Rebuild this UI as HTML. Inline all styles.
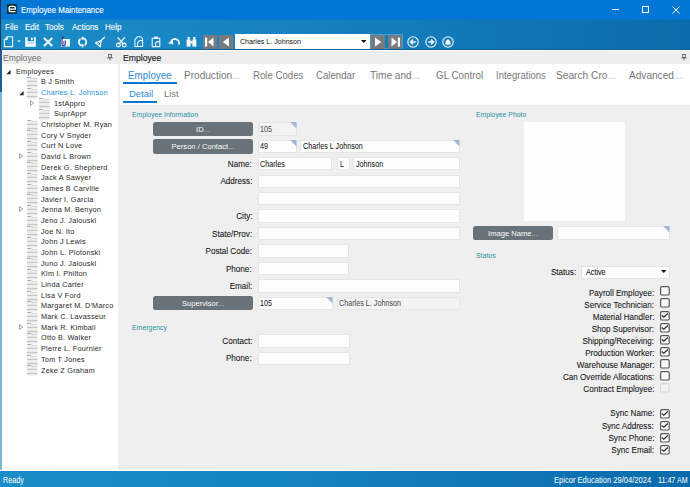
<!DOCTYPE html><html><head><meta charset="utf-8"><style>
html,body{margin:0;padding:0;}
body{width:690px;height:487px;position:relative;overflow:hidden;background:#f0eff0;font-family:'Liberation Sans',sans-serif;}
div,svg{box-sizing:border-box;}
svg{position:absolute;overflow:visible;}
</style></head><body>
<div style="position:absolute;left:0px;top:0px;width:690px;height:19px;background:#0377d6;"></div>
<div style="position:absolute;left:7px;top:4px;width:10px;height:10px;background:#13343a;"></div>
<svg style="left:7px;top:4px" width="10" height="10"><path d="M2.3 5 H8.3 V3.9 C8.3 2.7 7.7 2.3 6.7 2.3 H3.7 C2.7 2.3 2.1 2.9 2.1 3.9 V6.1 C2.1 7.1 2.7 7.7 3.7 7.7 H8.4" stroke="#fff" stroke-width="1.25" fill="none"/></svg>
<div style="position:absolute;top:6.00px;font-size:8.9px;line-height:8.9px;color:#fff;white-space:nowrap;-webkit-text-stroke:0.1px #fff;left:20.90px;transform:scaleX(0.8906);transform-origin:0 0;">Employee Maintenance</div>
<div style="position:absolute;left:612px;top:9px;width:7px;height:1px;background:#fff;"></div>
<div style="position:absolute;left:642px;top:6px;width:7px;height:7px;border:1px solid #fff;"></div>
<svg style="left:672px;top:6px" width="8" height="8"><path d="M0.5 0.5 L7.5 7.5 M7.5 0.5 L0.5 7.5" stroke="#fff" stroke-width="1"/></svg>
<div style="position:absolute;left:0px;top:19px;width:690px;height:30px;background:linear-gradient(90deg,#1b8cc8 0%,#1683c0 40%,#0c6cab 100%);"></div>
<div style="position:absolute;left:0px;top:19px;width:690px;height:1px;background:linear-gradient(90deg,#0f80cf 0%,#0c7ac6 40%,#0672c2 100%);"></div>
<div style="position:absolute;left:0px;top:49px;width:690px;height:1px;background:#0b5f9a;"></div>
<div style="position:absolute;left:0px;top:0px;width:1px;height:50px;background:#1f3550;"></div>
<div style="position:absolute;top:23.00px;font-size:8.85px;line-height:8.85px;color:#fff;white-space:nowrap;-webkit-text-stroke:0.1px #fff;left:4.70px;transform:scaleX(0.9100);transform-origin:0 0;">File</div>
<div style="position:absolute;top:23.00px;font-size:8.85px;line-height:8.85px;color:#fff;white-space:nowrap;-webkit-text-stroke:0.1px #fff;left:24.50px;transform:scaleX(0.9100);transform-origin:0 0;">Edit</div>
<div style="position:absolute;top:23.00px;font-size:8.85px;line-height:8.85px;color:#fff;white-space:nowrap;-webkit-text-stroke:0.1px #fff;left:45.20px;transform:scaleX(0.9100);transform-origin:0 0;">Tools</div>
<div style="position:absolute;top:23.00px;font-size:8.85px;line-height:8.85px;color:#fff;white-space:nowrap;-webkit-text-stroke:0.1px #fff;left:71.60px;transform:scaleX(0.9100);transform-origin:0 0;">Actions</div>
<div style="position:absolute;top:23.00px;font-size:8.85px;line-height:8.85px;color:#fff;white-space:nowrap;-webkit-text-stroke:0.1px #fff;left:104.50px;transform:scaleX(0.9100);transform-origin:0 0;">Help</div>
<svg style="left:0;top:0" width="460" height="50" viewBox="0 0 460 50">
<g fill="none" stroke="#f4f8fb" stroke-linejoin="round">
 <path d="M7.2 36.8 H12.6 V46.6 H4.4 V39.8 Z" stroke-width="1.1"/>
 <path d="M4.6 39.6 L7.4 39.6 L7.4 36.9" stroke-width="0.9"/>
</g>
<path d="M17.2 40.4 H20.8 L19 42.2 Z" fill="#f4f8fb"/>
<path d="M25.2 37.2 H35.8 V46.8 H25.2 Z" fill="#f4f8fb"/>
<rect x="27.6" y="37.2" width="6.4" height="4" fill="#1a8ac6"/>
<rect x="31" y="37.8" width="1.8" height="2.4" fill="#f4f8fb"/>
<rect x="27.6" y="42.6" width="6.4" height="1" fill="#8cc4e4"/>
<path d="M44 38 L52.2 46 M52.2 38 L44 46" stroke="#f4f8fb" stroke-width="2.1"/>
<path d="M61 39 H70 V46.6 H61 Z" fill="#f4f8fb"/>
<path d="M64 37 C62 37 62 38 62 39.5 V44.8 C62 46.2 65.2 46.2 65.2 44.8 V40.5" stroke="#1c2d86" stroke-width="1.1" fill="none"/>
<path d="M63.6 41 V44.6" stroke="#a03060" stroke-width="0.7"/>
<g fill="none" stroke="#f4f8fb" stroke-width="1.7">
 <path d="M80.48 38.97 A3.7 3.7 0 0 0 82.28 45.69"/>
 <path d="M84.72 45.03 A3.7 3.7 0 0 0 82.92 38.31"/>
</g>
<path d="M81.88 43.59 L84.68 45.69 L81.88 47.79 Z" fill="#f4f8fb"/>
<path d="M83.32 36.21 L80.52 38.31 L83.32 40.41 Z" fill="#f4f8fb"/>
<path d="M104.8 37 L100.8 40.8" stroke="#f4f8fb" stroke-width="1.3"/>
<path d="M101.2 40.6 L95.4 42.8 L100.2 46.8 Z" stroke="#f4f8fb" stroke-width="1.2" fill="none" stroke-linejoin="round"/>
<path d="M97.2 44.4 L100.8 41.4" stroke="#f4f8fb" stroke-width="0.8"/>
<g fill="none" stroke="#f4f8fb">
 <path d="M117.6 37.4 L123.8 44.2 M124.8 37.4 L118.6 44.2" stroke-width="1.3"/>
 <circle cx="118.4" cy="45" r="1.9" stroke-width="1.2"/>
 <circle cx="124.2" cy="45" r="1.9" stroke-width="1.2"/>
</g>
<g fill="none" stroke="#f4f8fb" stroke-width="1.05" stroke-linejoin="round">
 <path d="M137.4 36.8 H140.8 L142.6 38.6 V46.4 H134.9 V39.6 Z"/>
 <path d="M137.6 46.3 V42.6 L140 40.4 H142.5"/>
</g>
<g fill="none" stroke="#f4f8fb" stroke-width="1.05">
 <path d="M152.2 38.2 H159.8 V46.6 H152.2 Z"/>
 <path d="M155.6 46.5 V43 L157.2 41.6 H159.7"/>
</g>
<rect x="154.2" y="36.6" width="3.6" height="2.2" fill="#f4f8fb"/>
<path d="M171.2 41.6 A3.9 3.9 0 0 1 178.8 44.6" stroke="#f4f8fb" stroke-width="1.8" fill="none"/>
<path d="M168 43.2 L172.8 39.4 L173.4 44.4 Z" fill="#f4f8fb"/>
<g fill="#f4f8fb">
 <rect x="187.6" y="37" width="2.2" height="2.8"/>
 <rect x="193.2" y="37" width="2.2" height="2.8"/>
 <rect x="186.6" y="39.6" width="4" height="7"/>
 <rect x="192.4" y="39.6" width="4" height="7"/>
 <rect x="190.4" y="41" width="2.2" height="2.6"/>
</g>
</svg>
<div style="position:absolute;left:203px;top:35px;width:14px;height:14px;background:#777b80;"></div>
<svg style="left:203px;top:35px" width="14" height="14"><rect x="2" y="2.6" width="2.2" height="9" fill="#fff"/><path d="M10.5 2.6 V11.6 L5 7.1 Z" fill="#fff"/></svg>
<div style="position:absolute;left:219.3px;top:35px;width:14px;height:14px;background:#777b80;"></div>
<svg style="left:219.3px;top:35px" width="14" height="14"><path d="M10 2.6 V11.6 L3.8 7.1 Z" fill="#fff"/></svg>
<div style="position:absolute;left:235px;top:34px;width:134.5px;height:15px;background:#fff;"></div>
<svg style="left:360.5px;top:40px" width="6" height="4"><path d="M0 0 H5.5 L2.75 3 Z" fill="#111"/></svg>
<div style="position:absolute;top:38.00px;font-size:8.1px;line-height:8.1px;color:#111;white-space:nowrap;left:239.60px;transform:scaleX(0.8747);transform-origin:0 0;">Charles L. Johnson</div>
<div style="position:absolute;left:369.8px;top:34px;width:33.5px;height:15px;border:1px solid #3ca2d8;"></div>
<div style="position:absolute;left:371px;top:35px;width:14px;height:14px;background:#777b80;"></div>
<svg style="left:371px;top:35px" width="14" height="14"><path d="M4 2.6 V11.6 L10.2 7.1 Z" fill="#fff"/></svg>
<div style="position:absolute;left:387.5px;top:35px;width:14px;height:14px;background:#777b80;"></div>
<svg style="left:387.5px;top:35px" width="14" height="14"><path d="M3.5 2.6 V11.6 L9 7.1 Z" fill="#fff"/><rect x="9.8" y="2.6" width="2.2" height="9" fill="#fff"/></svg>
<svg style="left:407px;top:35.5px" width="12" height="12"><circle cx="6" cy="6" r="5.2" stroke="#f4f8fb" stroke-width="1.1" fill="none"/><path d="M8.8 6 H4 M6 3.6 L3.4 6 L6 8.4" stroke="#f4f8fb" stroke-width="1.5" fill="none"/></svg>
<svg style="left:424.5px;top:35.5px" width="12" height="12"><circle cx="6" cy="6" r="5.2" stroke="#f4f8fb" stroke-width="1.1" fill="none"/><path d="M3.2 6 H8 M6 3.6 L8.6 6 L6 8.4" stroke="#f4f8fb" stroke-width="1.5" fill="none"/></svg>
<svg style="left:441.7px;top:35.5px" width="12" height="12"><circle cx="6" cy="6" r="5.2" stroke="#f4f8fb" stroke-width="1.1" fill="none"/><path d="M3.5 8.8 V5.2 L6 3 L8.5 5.2 V8.8 Z" fill="#f4f8fb"/></svg>
<div style="position:absolute;left:1px;top:50px;width:117px;height:421px;background:#fff;"></div>
<div style="position:absolute;left:1px;top:50px;width:117px;height:14px;background:#efeeef;border-top:1px solid #fdfdfd;"></div>
<div style="position:absolute;top:53.00px;font-size:9.6px;line-height:9.6px;color:#6e6e6e;white-space:nowrap;left:3.00px;transform:scaleX(0.8978);transform-origin:0 0;">Employee</div>
<svg style="left:107px;top:54px" width="6" height="7"><path d="M1 0.5 H5 M1.6 0.5 V3.6 H4.4 V0.5 M0.3 3.8 H5.7 M3 3.8 V6.5" stroke="#606060" stroke-width="0.9" fill="none"/></svg>
<div style="position:absolute;left:0px;top:50px;width:1.5px;height:42px;background:#1f5c98;"></div>
<div style="position:absolute;left:0px;top:92px;width:1.5px;height:379px;background:#7cb8d6;"></div>
<svg style="left:5.6px;top:69.50px" width="5" height="5"><path d="M4.6 0 V4.2 H0.2 Z" fill="#262626"/></svg>
<div style="position:absolute;top:68.00px;font-size:8.1px;line-height:8.1px;color:#2b2b2b;white-space:nowrap;letter-spacing:0.25px;-webkit-text-stroke:0.03px #2b2b2b;left:15.70px;transform:scaleX(0.9000);transform-origin:0 0;">Employees</div>
<svg style="left:27px;top:77.072px" width="11" height="11"><path d="M0 0.4 H4 L5 1.4 H10.5 V10.2 H0 Z" fill="#efefef"/><rect x="0" y="0" width="4.2" height="0.9" fill="#a8a8a8"/><rect x="4.2" y="0.9" width="6.3" height="0.8" fill="#c8c8c8"/><rect x="0" y="3.9" width="10.5" height="1" fill="#c4c4c4"/><rect x="0" y="7.9" width="10.5" height="1" fill="#c4c4c4"/><rect x="0" y="9.6" width="10.5" height="0.6" fill="#d4d4d4"/></svg>
<div style="position:absolute;top:78.00px;font-size:8.1px;line-height:8.1px;color:#2b2b2b;white-space:nowrap;letter-spacing:0.25px;-webkit-text-stroke:0.03px #2b2b2b;left:40.90px;transform:scaleX(0.9000);transform-origin:0 0;">B J Smith</div>
<svg style="left:27px;top:87.74400000000001px" width="11" height="11"><path d="M0 0.4 H4 L5 1.4 H10.5 V10.2 H0 Z" fill="#efefef"/><rect x="0" y="0" width="4.2" height="0.9" fill="#a8a8a8"/><rect x="4.2" y="0.9" width="6.3" height="0.8" fill="#c8c8c8"/><rect x="0" y="3.9" width="10.5" height="1" fill="#c4c4c4"/><rect x="0" y="7.9" width="10.5" height="1" fill="#c4c4c4"/><rect x="0" y="9.6" width="10.5" height="0.6" fill="#d4d4d4"/></svg>
<svg style="left:18.6px;top:90.84px" width="5" height="5"><path d="M4.6 0 V4.2 H0.2 Z" fill="#262626"/></svg>
<div style="position:absolute;top:89.00px;font-size:8.1px;line-height:8.1px;color:#2394dc;white-space:nowrap;letter-spacing:0.25px;-webkit-text-stroke:0.03px #2394dc;left:40.90px;transform:scaleX(0.9000);transform-origin:0 0;">Charles L. Johnson</div>
<svg style="left:39px;top:98.41600000000001px" width="11" height="11"><path d="M0 0.4 H4 L5 1.4 H10.5 V10.2 H0 Z" fill="#efefef"/><rect x="0" y="0" width="4.2" height="0.9" fill="#a8a8a8"/><rect x="4.2" y="0.9" width="6.3" height="0.8" fill="#c8c8c8"/><rect x="0" y="3.9" width="10.5" height="1" fill="#c4c4c4"/><rect x="0" y="7.9" width="10.5" height="1" fill="#c4c4c4"/><rect x="0" y="9.6" width="10.5" height="0.6" fill="#d4d4d4"/></svg>
<svg style="left:30.4px;top:99.72px" width="5" height="6"><path d="M0.5 0.6 L3.8 3 L0.5 5.4 Z" stroke="#8a8a8a" stroke-width="0.8" fill="none"/></svg>
<div style="position:absolute;top:100.00px;font-size:8.1px;line-height:8.1px;color:#2b2b2b;white-space:nowrap;letter-spacing:0.25px;-webkit-text-stroke:0.03px #2b2b2b;left:53.60px;transform:scaleX(0.9000);transform-origin:0 0;">1stAppro</div>
<svg style="left:39px;top:109.08800000000001px" width="11" height="11"><path d="M0 0.4 H4 L5 1.4 H10.5 V10.2 H0 Z" fill="#efefef"/><rect x="0" y="0" width="4.2" height="0.9" fill="#a8a8a8"/><rect x="4.2" y="0.9" width="6.3" height="0.8" fill="#c8c8c8"/><rect x="0" y="3.9" width="10.5" height="1" fill="#c4c4c4"/><rect x="0" y="7.9" width="10.5" height="1" fill="#c4c4c4"/><rect x="0" y="9.6" width="10.5" height="0.6" fill="#d4d4d4"/></svg>
<div style="position:absolute;top:110.00px;font-size:8.1px;line-height:8.1px;color:#2b2b2b;white-space:nowrap;letter-spacing:0.25px;-webkit-text-stroke:0.03px #2b2b2b;left:53.60px;transform:scaleX(0.9000);transform-origin:0 0;">SuprAppr</div>
<svg style="left:27px;top:119.76px" width="11" height="11"><path d="M0 0.4 H4 L5 1.4 H10.5 V10.2 H0 Z" fill="#efefef"/><rect x="0" y="0" width="4.2" height="0.9" fill="#a8a8a8"/><rect x="4.2" y="0.9" width="6.3" height="0.8" fill="#c8c8c8"/><rect x="0" y="3.9" width="10.5" height="1" fill="#c4c4c4"/><rect x="0" y="7.9" width="10.5" height="1" fill="#c4c4c4"/><rect x="0" y="9.6" width="10.5" height="0.6" fill="#d4d4d4"/></svg>
<div style="position:absolute;top:121.00px;font-size:8.1px;line-height:8.1px;color:#2b2b2b;white-space:nowrap;letter-spacing:0.25px;-webkit-text-stroke:0.03px #2b2b2b;left:40.90px;transform:scaleX(0.9000);transform-origin:0 0;">Christopher M. Ryan</div>
<svg style="left:27px;top:130.43200000000002px" width="11" height="11"><path d="M0 0.4 H4 L5 1.4 H10.5 V10.2 H0 Z" fill="#efefef"/><rect x="0" y="0" width="4.2" height="0.9" fill="#a8a8a8"/><rect x="4.2" y="0.9" width="6.3" height="0.8" fill="#c8c8c8"/><rect x="0" y="3.9" width="10.5" height="1" fill="#c4c4c4"/><rect x="0" y="7.9" width="10.5" height="1" fill="#c4c4c4"/><rect x="0" y="9.6" width="10.5" height="0.6" fill="#d4d4d4"/></svg>
<div style="position:absolute;top:132.00px;font-size:8.1px;line-height:8.1px;color:#2b2b2b;white-space:nowrap;letter-spacing:0.25px;-webkit-text-stroke:0.03px #2b2b2b;left:40.90px;transform:scaleX(0.9000);transform-origin:0 0;">Cory V Snyder</div>
<svg style="left:27px;top:141.10399999999998px" width="11" height="11"><path d="M0 0.4 H4 L5 1.4 H10.5 V10.2 H0 Z" fill="#efefef"/><rect x="0" y="0" width="4.2" height="0.9" fill="#a8a8a8"/><rect x="4.2" y="0.9" width="6.3" height="0.8" fill="#c8c8c8"/><rect x="0" y="3.9" width="10.5" height="1" fill="#c4c4c4"/><rect x="0" y="7.9" width="10.5" height="1" fill="#c4c4c4"/><rect x="0" y="9.6" width="10.5" height="0.6" fill="#d4d4d4"/></svg>
<div style="position:absolute;top:142.00px;font-size:8.1px;line-height:8.1px;color:#2b2b2b;white-space:nowrap;letter-spacing:0.25px;-webkit-text-stroke:0.03px #2b2b2b;left:40.90px;transform:scaleX(0.9000);transform-origin:0 0;">Curt N Love</div>
<svg style="left:27px;top:151.776px" width="11" height="11"><path d="M0 0.4 H4 L5 1.4 H10.5 V10.2 H0 Z" fill="#efefef"/><rect x="0" y="0" width="4.2" height="0.9" fill="#a8a8a8"/><rect x="4.2" y="0.9" width="6.3" height="0.8" fill="#c8c8c8"/><rect x="0" y="3.9" width="10.5" height="1" fill="#c4c4c4"/><rect x="0" y="7.9" width="10.5" height="1" fill="#c4c4c4"/><rect x="0" y="9.6" width="10.5" height="0.6" fill="#d4d4d4"/></svg>
<svg style="left:18.5px;top:153.08px" width="5" height="6"><path d="M0.5 0.6 L3.8 3 L0.5 5.4 Z" stroke="#8a8a8a" stroke-width="0.8" fill="none"/></svg>
<div style="position:absolute;top:153.00px;font-size:8.1px;line-height:8.1px;color:#2b2b2b;white-space:nowrap;letter-spacing:0.25px;-webkit-text-stroke:0.03px #2b2b2b;left:40.90px;transform:scaleX(0.9000);transform-origin:0 0;">David L Brown</div>
<svg style="left:27px;top:162.44799999999998px" width="11" height="11"><path d="M0 0.4 H4 L5 1.4 H10.5 V10.2 H0 Z" fill="#efefef"/><rect x="0" y="0" width="4.2" height="0.9" fill="#a8a8a8"/><rect x="4.2" y="0.9" width="6.3" height="0.8" fill="#c8c8c8"/><rect x="0" y="3.9" width="10.5" height="1" fill="#c4c4c4"/><rect x="0" y="7.9" width="10.5" height="1" fill="#c4c4c4"/><rect x="0" y="9.6" width="10.5" height="0.6" fill="#d4d4d4"/></svg>
<div style="position:absolute;top:164.00px;font-size:8.1px;line-height:8.1px;color:#2b2b2b;white-space:nowrap;letter-spacing:0.25px;-webkit-text-stroke:0.03px #2b2b2b;left:40.90px;transform:scaleX(0.9000);transform-origin:0 0;">Derek G. Shepherd</div>
<svg style="left:27px;top:173.12px" width="11" height="11"><path d="M0 0.4 H4 L5 1.4 H10.5 V10.2 H0 Z" fill="#efefef"/><rect x="0" y="0" width="4.2" height="0.9" fill="#a8a8a8"/><rect x="4.2" y="0.9" width="6.3" height="0.8" fill="#c8c8c8"/><rect x="0" y="3.9" width="10.5" height="1" fill="#c4c4c4"/><rect x="0" y="7.9" width="10.5" height="1" fill="#c4c4c4"/><rect x="0" y="9.6" width="10.5" height="0.6" fill="#d4d4d4"/></svg>
<div style="position:absolute;top:174.00px;font-size:8.1px;line-height:8.1px;color:#2b2b2b;white-space:nowrap;letter-spacing:0.25px;-webkit-text-stroke:0.03px #2b2b2b;left:40.90px;transform:scaleX(0.9000);transform-origin:0 0;">Jack A Sawyer</div>
<svg style="left:27px;top:183.792px" width="11" height="11"><path d="M0 0.4 H4 L5 1.4 H10.5 V10.2 H0 Z" fill="#efefef"/><rect x="0" y="0" width="4.2" height="0.9" fill="#a8a8a8"/><rect x="4.2" y="0.9" width="6.3" height="0.8" fill="#c8c8c8"/><rect x="0" y="3.9" width="10.5" height="1" fill="#c4c4c4"/><rect x="0" y="7.9" width="10.5" height="1" fill="#c4c4c4"/><rect x="0" y="9.6" width="10.5" height="0.6" fill="#d4d4d4"/></svg>
<div style="position:absolute;top:185.00px;font-size:8.1px;line-height:8.1px;color:#2b2b2b;white-space:nowrap;letter-spacing:0.25px;-webkit-text-stroke:0.03px #2b2b2b;left:40.90px;transform:scaleX(0.9000);transform-origin:0 0;">James B Carville</div>
<svg style="left:27px;top:194.464px" width="11" height="11"><path d="M0 0.4 H4 L5 1.4 H10.5 V10.2 H0 Z" fill="#efefef"/><rect x="0" y="0" width="4.2" height="0.9" fill="#a8a8a8"/><rect x="4.2" y="0.9" width="6.3" height="0.8" fill="#c8c8c8"/><rect x="0" y="3.9" width="10.5" height="1" fill="#c4c4c4"/><rect x="0" y="7.9" width="10.5" height="1" fill="#c4c4c4"/><rect x="0" y="9.6" width="10.5" height="0.6" fill="#d4d4d4"/></svg>
<div style="position:absolute;top:196.00px;font-size:8.1px;line-height:8.1px;color:#2b2b2b;white-space:nowrap;letter-spacing:0.25px;-webkit-text-stroke:0.03px #2b2b2b;left:40.90px;transform:scaleX(0.9000);transform-origin:0 0;">Javier I. Garcia</div>
<svg style="left:27px;top:205.13600000000002px" width="11" height="11"><path d="M0 0.4 H4 L5 1.4 H10.5 V10.2 H0 Z" fill="#efefef"/><rect x="0" y="0" width="4.2" height="0.9" fill="#a8a8a8"/><rect x="4.2" y="0.9" width="6.3" height="0.8" fill="#c8c8c8"/><rect x="0" y="3.9" width="10.5" height="1" fill="#c4c4c4"/><rect x="0" y="7.9" width="10.5" height="1" fill="#c4c4c4"/><rect x="0" y="9.6" width="10.5" height="0.6" fill="#d4d4d4"/></svg>
<svg style="left:18.5px;top:206.44px" width="5" height="6"><path d="M0.5 0.6 L3.8 3 L0.5 5.4 Z" stroke="#8a8a8a" stroke-width="0.8" fill="none"/></svg>
<div style="position:absolute;top:206.00px;font-size:8.1px;line-height:8.1px;color:#2b2b2b;white-space:nowrap;letter-spacing:0.25px;-webkit-text-stroke:0.03px #2b2b2b;left:40.90px;transform:scaleX(0.9000);transform-origin:0 0;">Jenna M. Benyon</div>
<svg style="left:27px;top:215.808px" width="11" height="11"><path d="M0 0.4 H4 L5 1.4 H10.5 V10.2 H0 Z" fill="#efefef"/><rect x="0" y="0" width="4.2" height="0.9" fill="#a8a8a8"/><rect x="4.2" y="0.9" width="6.3" height="0.8" fill="#c8c8c8"/><rect x="0" y="3.9" width="10.5" height="1" fill="#c4c4c4"/><rect x="0" y="7.9" width="10.5" height="1" fill="#c4c4c4"/><rect x="0" y="9.6" width="10.5" height="0.6" fill="#d4d4d4"/></svg>
<div style="position:absolute;top:217.00px;font-size:8.1px;line-height:8.1px;color:#2b2b2b;white-space:nowrap;letter-spacing:0.25px;-webkit-text-stroke:0.03px #2b2b2b;left:40.90px;transform:scaleX(0.9000);transform-origin:0 0;">Jeno J. Jalouski</div>
<svg style="left:27px;top:226.48000000000002px" width="11" height="11"><path d="M0 0.4 H4 L5 1.4 H10.5 V10.2 H0 Z" fill="#efefef"/><rect x="0" y="0" width="4.2" height="0.9" fill="#a8a8a8"/><rect x="4.2" y="0.9" width="6.3" height="0.8" fill="#c8c8c8"/><rect x="0" y="3.9" width="10.5" height="1" fill="#c4c4c4"/><rect x="0" y="7.9" width="10.5" height="1" fill="#c4c4c4"/><rect x="0" y="9.6" width="10.5" height="0.6" fill="#d4d4d4"/></svg>
<div style="position:absolute;top:228.00px;font-size:8.1px;line-height:8.1px;color:#2b2b2b;white-space:nowrap;letter-spacing:0.25px;-webkit-text-stroke:0.03px #2b2b2b;left:40.90px;transform:scaleX(0.9000);transform-origin:0 0;">Joe N. Ito</div>
<svg style="left:27px;top:237.152px" width="11" height="11"><path d="M0 0.4 H4 L5 1.4 H10.5 V10.2 H0 Z" fill="#efefef"/><rect x="0" y="0" width="4.2" height="0.9" fill="#a8a8a8"/><rect x="4.2" y="0.9" width="6.3" height="0.8" fill="#c8c8c8"/><rect x="0" y="3.9" width="10.5" height="1" fill="#c4c4c4"/><rect x="0" y="7.9" width="10.5" height="1" fill="#c4c4c4"/><rect x="0" y="9.6" width="10.5" height="0.6" fill="#d4d4d4"/></svg>
<div style="position:absolute;top:238.00px;font-size:8.1px;line-height:8.1px;color:#2b2b2b;white-space:nowrap;letter-spacing:0.25px;-webkit-text-stroke:0.03px #2b2b2b;left:40.90px;transform:scaleX(0.9000);transform-origin:0 0;">John J Lewis</div>
<svg style="left:27px;top:247.824px" width="11" height="11"><path d="M0 0.4 H4 L5 1.4 H10.5 V10.2 H0 Z" fill="#efefef"/><rect x="0" y="0" width="4.2" height="0.9" fill="#a8a8a8"/><rect x="4.2" y="0.9" width="6.3" height="0.8" fill="#c8c8c8"/><rect x="0" y="3.9" width="10.5" height="1" fill="#c4c4c4"/><rect x="0" y="7.9" width="10.5" height="1" fill="#c4c4c4"/><rect x="0" y="9.6" width="10.5" height="0.6" fill="#d4d4d4"/></svg>
<div style="position:absolute;top:249.00px;font-size:8.1px;line-height:8.1px;color:#2b2b2b;white-space:nowrap;letter-spacing:0.25px;-webkit-text-stroke:0.03px #2b2b2b;left:40.90px;transform:scaleX(0.9000);transform-origin:0 0;">John L. Plotonski</div>
<svg style="left:27px;top:258.496px" width="11" height="11"><path d="M0 0.4 H4 L5 1.4 H10.5 V10.2 H0 Z" fill="#efefef"/><rect x="0" y="0" width="4.2" height="0.9" fill="#a8a8a8"/><rect x="4.2" y="0.9" width="6.3" height="0.8" fill="#c8c8c8"/><rect x="0" y="3.9" width="10.5" height="1" fill="#c4c4c4"/><rect x="0" y="7.9" width="10.5" height="1" fill="#c4c4c4"/><rect x="0" y="9.6" width="10.5" height="0.6" fill="#d4d4d4"/></svg>
<div style="position:absolute;top:260.00px;font-size:8.1px;line-height:8.1px;color:#2b2b2b;white-space:nowrap;letter-spacing:0.25px;-webkit-text-stroke:0.03px #2b2b2b;left:40.90px;transform:scaleX(0.9000);transform-origin:0 0;">Juno J. Jalouski</div>
<svg style="left:27px;top:269.168px" width="11" height="11"><path d="M0 0.4 H4 L5 1.4 H10.5 V10.2 H0 Z" fill="#efefef"/><rect x="0" y="0" width="4.2" height="0.9" fill="#a8a8a8"/><rect x="4.2" y="0.9" width="6.3" height="0.8" fill="#c8c8c8"/><rect x="0" y="3.9" width="10.5" height="1" fill="#c4c4c4"/><rect x="0" y="7.9" width="10.5" height="1" fill="#c4c4c4"/><rect x="0" y="9.6" width="10.5" height="0.6" fill="#d4d4d4"/></svg>
<div style="position:absolute;top:270.00px;font-size:8.1px;line-height:8.1px;color:#2b2b2b;white-space:nowrap;letter-spacing:0.25px;-webkit-text-stroke:0.03px #2b2b2b;left:40.90px;transform:scaleX(0.9000);transform-origin:0 0;">Kim I. Philton</div>
<svg style="left:27px;top:279.84px" width="11" height="11"><path d="M0 0.4 H4 L5 1.4 H10.5 V10.2 H0 Z" fill="#efefef"/><rect x="0" y="0" width="4.2" height="0.9" fill="#a8a8a8"/><rect x="4.2" y="0.9" width="6.3" height="0.8" fill="#c8c8c8"/><rect x="0" y="3.9" width="10.5" height="1" fill="#c4c4c4"/><rect x="0" y="7.9" width="10.5" height="1" fill="#c4c4c4"/><rect x="0" y="9.6" width="10.5" height="0.6" fill="#d4d4d4"/></svg>
<div style="position:absolute;top:281.00px;font-size:8.1px;line-height:8.1px;color:#2b2b2b;white-space:nowrap;letter-spacing:0.25px;-webkit-text-stroke:0.03px #2b2b2b;left:40.90px;transform:scaleX(0.9000);transform-origin:0 0;">Linda Carter</div>
<svg style="left:27px;top:290.512px" width="11" height="11"><path d="M0 0.4 H4 L5 1.4 H10.5 V10.2 H0 Z" fill="#efefef"/><rect x="0" y="0" width="4.2" height="0.9" fill="#a8a8a8"/><rect x="4.2" y="0.9" width="6.3" height="0.8" fill="#c8c8c8"/><rect x="0" y="3.9" width="10.5" height="1" fill="#c4c4c4"/><rect x="0" y="7.9" width="10.5" height="1" fill="#c4c4c4"/><rect x="0" y="9.6" width="10.5" height="0.6" fill="#d4d4d4"/></svg>
<div style="position:absolute;top:292.00px;font-size:8.1px;line-height:8.1px;color:#2b2b2b;white-space:nowrap;letter-spacing:0.25px;-webkit-text-stroke:0.03px #2b2b2b;left:40.90px;transform:scaleX(0.9000);transform-origin:0 0;">Lisa V Ford</div>
<svg style="left:27px;top:301.184px" width="11" height="11"><path d="M0 0.4 H4 L5 1.4 H10.5 V10.2 H0 Z" fill="#efefef"/><rect x="0" y="0" width="4.2" height="0.9" fill="#a8a8a8"/><rect x="4.2" y="0.9" width="6.3" height="0.8" fill="#c8c8c8"/><rect x="0" y="3.9" width="10.5" height="1" fill="#c4c4c4"/><rect x="0" y="7.9" width="10.5" height="1" fill="#c4c4c4"/><rect x="0" y="9.6" width="10.5" height="0.6" fill="#d4d4d4"/></svg>
<div style="position:absolute;top:302.00px;font-size:8.1px;line-height:8.1px;color:#2b2b2b;white-space:nowrap;letter-spacing:0.25px;-webkit-text-stroke:0.03px #2b2b2b;left:40.90px;transform:scaleX(0.9000);transform-origin:0 0;">Margaret M. D'Marco</div>
<svg style="left:27px;top:311.856px" width="11" height="11"><path d="M0 0.4 H4 L5 1.4 H10.5 V10.2 H0 Z" fill="#efefef"/><rect x="0" y="0" width="4.2" height="0.9" fill="#a8a8a8"/><rect x="4.2" y="0.9" width="6.3" height="0.8" fill="#c8c8c8"/><rect x="0" y="3.9" width="10.5" height="1" fill="#c4c4c4"/><rect x="0" y="7.9" width="10.5" height="1" fill="#c4c4c4"/><rect x="0" y="9.6" width="10.5" height="0.6" fill="#d4d4d4"/></svg>
<div style="position:absolute;top:313.00px;font-size:8.1px;line-height:8.1px;color:#2b2b2b;white-space:nowrap;letter-spacing:0.25px;-webkit-text-stroke:0.03px #2b2b2b;left:40.90px;transform:scaleX(0.9000);transform-origin:0 0;">Mark C. Lavasseur</div>
<svg style="left:27px;top:322.528px" width="11" height="11"><path d="M0 0.4 H4 L5 1.4 H10.5 V10.2 H0 Z" fill="#efefef"/><rect x="0" y="0" width="4.2" height="0.9" fill="#a8a8a8"/><rect x="4.2" y="0.9" width="6.3" height="0.8" fill="#c8c8c8"/><rect x="0" y="3.9" width="10.5" height="1" fill="#c4c4c4"/><rect x="0" y="7.9" width="10.5" height="1" fill="#c4c4c4"/><rect x="0" y="9.6" width="10.5" height="0.6" fill="#d4d4d4"/></svg>
<svg style="left:18.5px;top:323.83px" width="5" height="6"><path d="M0.5 0.6 L3.8 3 L0.5 5.4 Z" stroke="#8a8a8a" stroke-width="0.8" fill="none"/></svg>
<div style="position:absolute;top:324.00px;font-size:8.1px;line-height:8.1px;color:#2b2b2b;white-space:nowrap;letter-spacing:0.25px;-webkit-text-stroke:0.03px #2b2b2b;left:40.90px;transform:scaleX(0.9000);transform-origin:0 0;">Mark R. Kimball</div>
<svg style="left:27px;top:333.2px" width="11" height="11"><path d="M0 0.4 H4 L5 1.4 H10.5 V10.2 H0 Z" fill="#efefef"/><rect x="0" y="0" width="4.2" height="0.9" fill="#a8a8a8"/><rect x="4.2" y="0.9" width="6.3" height="0.8" fill="#c8c8c8"/><rect x="0" y="3.9" width="10.5" height="1" fill="#c4c4c4"/><rect x="0" y="7.9" width="10.5" height="1" fill="#c4c4c4"/><rect x="0" y="9.6" width="10.5" height="0.6" fill="#d4d4d4"/></svg>
<div style="position:absolute;top:334.00px;font-size:8.1px;line-height:8.1px;color:#2b2b2b;white-space:nowrap;letter-spacing:0.25px;-webkit-text-stroke:0.03px #2b2b2b;left:40.90px;transform:scaleX(0.9000);transform-origin:0 0;">Otto B. Walker</div>
<svg style="left:27px;top:343.872px" width="11" height="11"><path d="M0 0.4 H4 L5 1.4 H10.5 V10.2 H0 Z" fill="#efefef"/><rect x="0" y="0" width="4.2" height="0.9" fill="#a8a8a8"/><rect x="4.2" y="0.9" width="6.3" height="0.8" fill="#c8c8c8"/><rect x="0" y="3.9" width="10.5" height="1" fill="#c4c4c4"/><rect x="0" y="7.9" width="10.5" height="1" fill="#c4c4c4"/><rect x="0" y="9.6" width="10.5" height="0.6" fill="#d4d4d4"/></svg>
<div style="position:absolute;top:345.00px;font-size:8.1px;line-height:8.1px;color:#2b2b2b;white-space:nowrap;letter-spacing:0.25px;-webkit-text-stroke:0.03px #2b2b2b;left:40.90px;transform:scaleX(0.9000);transform-origin:0 0;">Pierre L. Fournier</div>
<svg style="left:27px;top:354.544px" width="11" height="11"><path d="M0 0.4 H4 L5 1.4 H10.5 V10.2 H0 Z" fill="#efefef"/><rect x="0" y="0" width="4.2" height="0.9" fill="#a8a8a8"/><rect x="4.2" y="0.9" width="6.3" height="0.8" fill="#c8c8c8"/><rect x="0" y="3.9" width="10.5" height="1" fill="#c4c4c4"/><rect x="0" y="7.9" width="10.5" height="1" fill="#c4c4c4"/><rect x="0" y="9.6" width="10.5" height="0.6" fill="#d4d4d4"/></svg>
<div style="position:absolute;top:356.00px;font-size:8.1px;line-height:8.1px;color:#2b2b2b;white-space:nowrap;letter-spacing:0.25px;-webkit-text-stroke:0.03px #2b2b2b;left:40.90px;transform:scaleX(0.9000);transform-origin:0 0;">Tom T Jones</div>
<svg style="left:27px;top:365.216px" width="11" height="11"><path d="M0 0.4 H4 L5 1.4 H10.5 V10.2 H0 Z" fill="#efefef"/><rect x="0" y="0" width="4.2" height="0.9" fill="#a8a8a8"/><rect x="4.2" y="0.9" width="6.3" height="0.8" fill="#c8c8c8"/><rect x="0" y="3.9" width="10.5" height="1" fill="#c4c4c4"/><rect x="0" y="7.9" width="10.5" height="1" fill="#c4c4c4"/><rect x="0" y="9.6" width="10.5" height="0.6" fill="#d4d4d4"/></svg>
<div style="position:absolute;top:367.00px;font-size:8.1px;line-height:8.1px;color:#2b2b2b;white-space:nowrap;letter-spacing:0.25px;-webkit-text-stroke:0.03px #2b2b2b;left:40.90px;transform:scaleX(0.9000);transform-origin:0 0;">Zeke Z Graham</div>
<div style="position:absolute;left:118px;top:50px;width:572px;height:14px;background:#efeeef;border-top:1px solid #fdfdfd;"></div>
<div style="position:absolute;top:53.00px;font-size:9.45px;line-height:9.45px;color:#1a1a1a;white-space:nowrap;-webkit-text-stroke:0.15px #1a1a1a;left:123.00px;transform:scaleX(0.9150);transform-origin:0 0;">Employee</div>
<svg style="left:680.5px;top:54px" width="6" height="7"><path d="M1 0.5 H5 M1.6 0.5 V3.6 H4.4 V0.5 M0.3 3.8 H5.7 M3 3.8 V6.5" stroke="#606060" stroke-width="0.9" fill="none"/></svg>
<div style="position:absolute;left:120px;top:64px;width:570px;height:41px;background:#fff;"></div>
<div style="position:absolute;top:71.00px;font-size:10.0px;line-height:10.0px;color:#2b8ad6;white-space:nowrap;left:127.80px;transform:scaleX(0.9827);transform-origin:0 0;">Employee</div>
<div style="position:absolute;top:71.00px;font-size:10.0px;line-height:10.0px;color:#777777;white-space:nowrap;left:183.70px;transform:scaleX(1.0064);transform-origin:0 0;">Production<span style="color:#b4b4b4">...</span></div>
<div style="position:absolute;top:71.00px;font-size:10.0px;line-height:10.0px;color:#777777;white-space:nowrap;left:252.70px;transform:scaleX(0.9646);transform-origin:0 0;">Role Codes</div>
<div style="position:absolute;top:71.00px;font-size:10.0px;line-height:10.0px;color:#777777;white-space:nowrap;left:315.60px;transform:scaleX(0.9635);transform-origin:0 0;">Calendar</div>
<div style="position:absolute;top:71.00px;font-size:10.0px;line-height:10.0px;color:#777777;white-space:nowrap;left:370.10px;transform:scaleX(1.0091);transform-origin:0 0;">Time and<span style="color:#b4b4b4">...</span></div>
<div style="position:absolute;top:71.00px;font-size:10.0px;line-height:10.0px;color:#777777;white-space:nowrap;left:435.70px;transform:scaleX(0.9844);transform-origin:0 0;">GL Control</div>
<div style="position:absolute;top:71.00px;font-size:10.0px;line-height:10.0px;color:#777777;white-space:nowrap;left:495.80px;transform:scaleX(0.9549);transform-origin:0 0;">Integrations</div>
<div style="position:absolute;top:71.00px;font-size:10.0px;line-height:10.0px;color:#777777;white-space:nowrap;left:556.10px;transform:scaleX(1.0185);transform-origin:0 0;">Search Cro<span style="color:#b4b4b4">...</span></div>
<div style="position:absolute;top:71.00px;font-size:10.0px;line-height:10.0px;color:#777777;white-space:nowrap;left:628.60px;transform:scaleX(1.0092);transform-origin:0 0;">Advanced<span style="color:#b4b4b4">...</span></div>
<div style="position:absolute;left:123px;top:82px;width:54px;height:2px;background:#0f76cf;"></div>
<div style="position:absolute;top:89.00px;font-size:9.45px;line-height:9.45px;color:#2b8ad6;white-space:nowrap;left:128.80px;transform:scaleX(1.0030);transform-origin:0 0;">Detail</div>
<div style="position:absolute;top:89.00px;font-size:9.45px;line-height:9.45px;color:#777777;white-space:nowrap;left:163.50px;transform:scaleX(0.9873);transform-origin:0 0;">List</div>
<div style="position:absolute;left:123px;top:101px;width:34.3px;height:2px;background:#0f76cf;"></div>
<div style="position:absolute;top:111.00px;font-size:8.0px;line-height:8.0px;color:#2a8fa0;white-space:nowrap;left:131.90px;transform:scaleX(0.8469);transform-origin:0 0;">Employee Information</div>
<div style="position:absolute;top:111.00px;font-size:8.0px;line-height:8.0px;color:#2a8fa0;white-space:nowrap;left:476.20px;transform:scaleX(0.8552);transform-origin:0 0;">Employee Photo</div>
<div style="position:absolute;top:252.00px;font-size:8.0px;line-height:8.0px;color:#2a8fa0;white-space:nowrap;left:476.40px;transform:scaleX(0.8642);transform-origin:0 0;">Status</div>
<div style="position:absolute;top:324.00px;font-size:8.0px;line-height:8.0px;color:#2a8fa0;white-space:nowrap;left:131.70px;transform:scaleX(0.8650);transform-origin:0 0;">Emergency</div>
<div style="position:absolute;left:153px;top:121.7px;width:100px;height:14.3px;background:#6a7279;border-radius:2.5px;"></div>
<div style="position:absolute;top:126.00px;font-size:8.0px;line-height:8.0px;color:#fcfcfc;white-space:nowrap;left:3.00px;width:400px;text-align:center;transform:scaleX(0.9500);transform-origin:50% 0;">ID<span style="color:#c8ccd0;-webkit-text-stroke:0">...</span></div>
<div style="position:absolute;left:257.7px;top:122.2px;width:39.2px;height:13.4px;background:#f4f3f4;border:1px solid #e7e6e7;"></div>
<svg style="left:290.4px;top:122.2px" width="6.5" height="6.5"><path d="M0 0 H6.5 V6.5 Z" fill="#a2b8d6"/></svg>
<div style="position:absolute;top:125.00px;font-size:8.43px;line-height:8.43px;color:#505050;white-space:nowrap;-webkit-text-stroke:0.05px #505050;left:260.30px;transform:scaleX(0.8550);transform-origin:0 0;">105</div>
<div style="position:absolute;left:153px;top:139.25px;width:100px;height:14.3px;background:#6a7279;border-radius:2.5px;"></div>
<div style="position:absolute;top:143.00px;font-size:8.0px;line-height:8.0px;color:#fcfcfc;white-space:nowrap;left:3.00px;width:400px;text-align:center;transform:scaleX(0.9500);transform-origin:50% 0;">Person / Contact<span style="color:#c8ccd0;-webkit-text-stroke:0">...</span></div>
<div style="position:absolute;left:257.7px;top:139.65px;width:39.2px;height:13.4px;background:#fefefe;border:1px solid #e7e6e7;"></div>
<svg style="left:290.4px;top:139.65px" width="6.5" height="6.5"><path d="M0 0 H6.5 V6.5 Z" fill="#a2b8d6"/></svg>
<div style="position:absolute;top:142.00px;font-size:8.43px;line-height:8.43px;color:#161616;white-space:nowrap;-webkit-text-stroke:0.05px #161616;left:260.30px;transform:scaleX(0.8550);transform-origin:0 0;">49</div>
<div style="position:absolute;left:300.4px;top:139.65px;width:159.3px;height:13.4px;background:#fefefe;border:1px solid #e7e6e7;"></div>
<svg style="left:453.2px;top:139.65px" width="6.5" height="6.5"><path d="M0 0 H6.5 V6.5 Z" fill="#a2b8d6"/></svg>
<div style="position:absolute;top:142.00px;font-size:8.43px;line-height:8.43px;color:#161616;white-space:nowrap;-webkit-text-stroke:0.05px #161616;left:303.00px;transform:scaleX(0.8550);transform-origin:0 0;">Charles L Johnson</div>
<div style="position:absolute;top:160.00px;font-size:8.72px;line-height:8.72px;color:#151515;white-space:nowrap;-webkit-text-stroke:0.08px #151515;right:437.90px;text-align:right;transform:scaleX(0.9300);transform-origin:100% 0;">Name:</div>
<div style="position:absolute;top:177.00px;font-size:8.72px;line-height:8.72px;color:#151515;white-space:nowrap;-webkit-text-stroke:0.08px #151515;right:437.90px;text-align:right;transform:scaleX(0.9300);transform-origin:100% 0;">Address:</div>
<div style="position:absolute;top:212.00px;font-size:8.72px;line-height:8.72px;color:#151515;white-space:nowrap;-webkit-text-stroke:0.08px #151515;right:437.90px;text-align:right;transform:scaleX(0.9300);transform-origin:100% 0;">City:</div>
<div style="position:absolute;top:230.00px;font-size:8.72px;line-height:8.72px;color:#151515;white-space:nowrap;-webkit-text-stroke:0.08px #151515;right:437.90px;text-align:right;transform:scaleX(0.9300);transform-origin:100% 0;">State/Prov:</div>
<div style="position:absolute;top:247.00px;font-size:8.72px;line-height:8.72px;color:#151515;white-space:nowrap;-webkit-text-stroke:0.08px #151515;right:437.90px;text-align:right;transform:scaleX(0.9300);transform-origin:100% 0;">Postal Code:</div>
<div style="position:absolute;top:265.00px;font-size:8.72px;line-height:8.72px;color:#151515;white-space:nowrap;-webkit-text-stroke:0.08px #151515;right:437.90px;text-align:right;transform:scaleX(0.9300);transform-origin:100% 0;">Phone:</div>
<div style="position:absolute;top:282.00px;font-size:8.72px;line-height:8.72px;color:#151515;white-space:nowrap;-webkit-text-stroke:0.08px #151515;right:437.90px;text-align:right;transform:scaleX(0.9300);transform-origin:100% 0;">Email:</div>
<div style="position:absolute;left:257.7px;top:157.1px;width:74.4px;height:13.4px;background:#fefefe;border:1px solid #e7e6e7;"></div>
<div style="position:absolute;top:160.00px;font-size:8.43px;line-height:8.43px;color:#161616;white-space:nowrap;-webkit-text-stroke:0.05px #161616;left:260.30px;transform:scaleX(0.8550);transform-origin:0 0;">Charles</div>
<div style="position:absolute;left:337px;top:157.1px;width:12.6px;height:13.4px;background:#fefefe;border:1px solid #e7e6e7;"></div>
<div style="position:absolute;top:160.00px;font-size:8.43px;line-height:8.43px;color:#161616;white-space:nowrap;-webkit-text-stroke:0.05px #161616;left:339.60px;transform:scaleX(0.8550);transform-origin:0 0;">L</div>
<div style="position:absolute;left:353.1px;top:157.1px;width:106.6px;height:13.4px;background:#fefefe;border:1px solid #e7e6e7;"></div>
<div style="position:absolute;top:160.00px;font-size:8.43px;line-height:8.43px;color:#161616;white-space:nowrap;-webkit-text-stroke:0.05px #161616;left:355.70px;transform:scaleX(0.8550);transform-origin:0 0;">Johnson</div>
<div style="position:absolute;left:257.7px;top:174.55px;width:202px;height:13.4px;background:#fefefe;border:1px solid #e7e6e7;"></div>
<div style="position:absolute;left:257.7px;top:192.0px;width:202px;height:13.4px;background:#fefefe;border:1px solid #e7e6e7;"></div>
<div style="position:absolute;left:257.7px;top:209.45px;width:202px;height:13.4px;background:#fefefe;border:1px solid #e7e6e7;"></div>
<div style="position:absolute;left:257.7px;top:226.89999999999998px;width:202px;height:13.4px;background:#fefefe;border:1px solid #e7e6e7;"></div>
<div style="position:absolute;left:257.7px;top:244.35px;width:91.8px;height:13.4px;background:#fefefe;border:1px solid #e7e6e7;"></div>
<div style="position:absolute;left:257.7px;top:261.8px;width:91.8px;height:13.4px;background:#fefefe;border:1px solid #e7e6e7;"></div>
<div style="position:absolute;left:257.7px;top:279.25px;width:202px;height:13.4px;background:#fefefe;border:1px solid #e7e6e7;"></div>
<div style="position:absolute;left:153px;top:296.09999999999997px;width:100px;height:14.3px;background:#6a7279;border-radius:2.5px;"></div>
<div style="position:absolute;top:300.00px;font-size:8.0px;line-height:8.0px;color:#fcfcfc;white-space:nowrap;left:3.00px;width:400px;text-align:center;transform:scaleX(0.9500);transform-origin:50% 0;">Supervisor<span style="color:#c8ccd0;-webkit-text-stroke:0">...</span></div>
<div style="position:absolute;left:257.7px;top:297.0px;width:75px;height:13.4px;background:#fefefe;border:1px solid #e7e6e7;"></div>
<svg style="left:326.2px;top:297.0px" width="6.5" height="6.5"><path d="M0 0 H6.5 V6.5 Z" fill="#a2b8d6"/></svg>
<div style="position:absolute;top:299.00px;font-size:8.43px;line-height:8.43px;color:#161616;white-space:nowrap;-webkit-text-stroke:0.05px #161616;left:260.30px;transform:scaleX(0.8550);transform-origin:0 0;">105</div>
<div style="position:absolute;left:336.5px;top:297.0px;width:123.2px;height:13.4px;background:#f4f3f4;border:1px solid #e7e6e7;"></div>
<div style="position:absolute;top:299.00px;font-size:8.43px;line-height:8.43px;color:#505050;white-space:nowrap;-webkit-text-stroke:0.05px #505050;left:339.10px;transform:scaleX(0.8550);transform-origin:0 0;">Charles L. Johnson</div>
<div style="position:absolute;top:337.00px;font-size:8.72px;line-height:8.72px;color:#151515;white-space:nowrap;-webkit-text-stroke:0.08px #151515;right:437.90px;text-align:right;transform:scaleX(0.9300);transform-origin:100% 0;">Contact:</div>
<div style="position:absolute;left:257.5px;top:334.3px;width:92px;height:13.4px;background:#fefefe;border:1px solid #e7e6e7;"></div>
<div style="position:absolute;top:354.00px;font-size:8.72px;line-height:8.72px;color:#151515;white-space:nowrap;-webkit-text-stroke:0.08px #151515;right:437.90px;text-align:right;transform:scaleX(0.9300);transform-origin:100% 0;">Phone:</div>
<div style="position:absolute;left:257.5px;top:351.7px;width:92px;height:13.4px;background:#fefefe;border:1px solid #e7e6e7;"></div>
<div style="position:absolute;left:524.2px;top:121.9px;width:100.4px;height:99.5px;background:#fefefe;"></div>
<div style="position:absolute;left:472.5px;top:226px;width:80.5px;height:14.3px;background:#6a7279;border-radius:2.5px;"></div>
<div style="position:absolute;top:230.00px;font-size:8.0px;line-height:8.0px;color:#fcfcfc;white-space:nowrap;left:312.75px;width:400px;text-align:center;transform:scaleX(0.9500);transform-origin:50% 0;">Image Name<span style="color:#c8ccd0;-webkit-text-stroke:0">...</span></div>
<div style="position:absolute;left:557.3px;top:226px;width:112.5px;height:14px;background:#fefefe;border:1px solid #e7e6e7;"></div>
<svg style="left:663.3px;top:226px" width="6.5" height="6.5"><path d="M0 0 H6.5 V6.5 Z" fill="#a2b8d6"/></svg>
<div style="position:absolute;top:268.00px;font-size:8.72px;line-height:8.72px;color:#151515;white-space:nowrap;-webkit-text-stroke:0.08px #151515;right:114.10px;text-align:right;transform:scaleX(0.9300);transform-origin:100% 0;">Status:</div>
<div style="position:absolute;left:581.4px;top:265.6px;width:88.4px;height:13.3px;background:#fefefe;border:1px solid #e2e1e2;"></div>
<div style="position:absolute;top:268.00px;font-size:8.43px;line-height:8.43px;color:#161616;white-space:nowrap;-webkit-text-stroke:0.1px #161616;left:585.60px;transform:scaleX(0.8550);transform-origin:0 0;">Active</div>
<svg style="left:660.5px;top:270.3px" width="6" height="4"><path d="M0 0 H5.5 L2.75 3 Z" fill="#111"/></svg>
<div style="position:absolute;top:289.00px;font-size:8.72px;line-height:8.72px;color:#151515;white-space:nowrap;-webkit-text-stroke:0.08px #151515;right:35.80px;text-align:right;transform:scaleX(0.9300);transform-origin:100% 0;">Payroll Employee:</div>
<svg style="left:660px;top:286.4px" width="10" height="10"><rect x="0.6" y="0.6" width="8.6" height="8.4" rx="1.3" stroke="#575757" stroke-width="1.2" fill="#fbfbfb"/></svg>
<div style="position:absolute;top:301.00px;font-size:8.72px;line-height:8.72px;color:#151515;white-space:nowrap;-webkit-text-stroke:0.08px #151515;right:35.80px;text-align:right;transform:scaleX(0.9300);transform-origin:100% 0;">Service Technician:</div>
<svg style="left:660px;top:298.47999999999996px" width="10" height="10"><rect x="0.6" y="0.6" width="8.6" height="8.4" rx="1.3" stroke="#575757" stroke-width="1.2" fill="#fbfbfb"/></svg>
<div style="position:absolute;top:313.00px;font-size:8.72px;line-height:8.72px;color:#151515;white-space:nowrap;-webkit-text-stroke:0.08px #151515;right:35.80px;text-align:right;transform:scaleX(0.9300);transform-origin:100% 0;">Material Handler:</div>
<svg style="left:660px;top:310.56px" width="10" height="10"><rect x="0.6" y="0.6" width="8.6" height="8.4" rx="1.3" stroke="#575757" stroke-width="1.2" fill="#fbfbfb"/><path d="M1.9 4.5 L3.8 6.2 L7.8 2.5" stroke="#262626" stroke-width="1.15" fill="none"/></svg>
<div style="position:absolute;top:325.00px;font-size:8.72px;line-height:8.72px;color:#151515;white-space:nowrap;-webkit-text-stroke:0.08px #151515;right:35.80px;text-align:right;transform:scaleX(0.9300);transform-origin:100% 0;">Shop Supervisor:</div>
<svg style="left:660px;top:322.64px" width="10" height="10"><rect x="0.6" y="0.6" width="8.6" height="8.4" rx="1.3" stroke="#575757" stroke-width="1.2" fill="#fbfbfb"/><path d="M1.9 4.5 L3.8 6.2 L7.8 2.5" stroke="#262626" stroke-width="1.15" fill="none"/></svg>
<div style="position:absolute;top:337.00px;font-size:8.72px;line-height:8.72px;color:#151515;white-space:nowrap;-webkit-text-stroke:0.08px #151515;right:35.80px;text-align:right;transform:scaleX(0.9300);transform-origin:100% 0;">Shipping/Receiving:</div>
<svg style="left:660px;top:334.71999999999997px" width="10" height="10"><rect x="0.6" y="0.6" width="8.6" height="8.4" rx="1.3" stroke="#575757" stroke-width="1.2" fill="#fbfbfb"/><path d="M1.9 4.5 L3.8 6.2 L7.8 2.5" stroke="#262626" stroke-width="1.15" fill="none"/></svg>
<div style="position:absolute;top:349.00px;font-size:8.72px;line-height:8.72px;color:#151515;white-space:nowrap;-webkit-text-stroke:0.08px #151515;right:35.80px;text-align:right;transform:scaleX(0.9300);transform-origin:100% 0;">Production Worker:</div>
<svg style="left:660px;top:346.79999999999995px" width="10" height="10"><rect x="0.6" y="0.6" width="8.6" height="8.4" rx="1.3" stroke="#575757" stroke-width="1.2" fill="#fbfbfb"/><path d="M1.9 4.5 L3.8 6.2 L7.8 2.5" stroke="#262626" stroke-width="1.15" fill="none"/></svg>
<div style="position:absolute;top:361.00px;font-size:8.72px;line-height:8.72px;color:#151515;white-space:nowrap;-webkit-text-stroke:0.08px #151515;right:35.80px;text-align:right;transform:scaleX(0.9300);transform-origin:100% 0;">Warehouse Manager:</div>
<svg style="left:660px;top:358.88px" width="10" height="10"><rect x="0.6" y="0.6" width="8.6" height="8.4" rx="1.3" stroke="#575757" stroke-width="1.2" fill="#fbfbfb"/></svg>
<div style="position:absolute;top:373.00px;font-size:8.72px;line-height:8.72px;color:#151515;white-space:nowrap;-webkit-text-stroke:0.08px #151515;right:35.80px;text-align:right;transform:scaleX(0.9300);transform-origin:100% 0;">Can Override Allocations:</div>
<svg style="left:660px;top:370.96px" width="10" height="10"><rect x="0.6" y="0.6" width="8.6" height="8.4" rx="1.3" stroke="#575757" stroke-width="1.2" fill="#fbfbfb"/></svg>
<div style="position:absolute;top:385.00px;font-size:8.72px;line-height:8.72px;color:#151515;white-space:nowrap;-webkit-text-stroke:0.08px #151515;right:35.80px;text-align:right;transform:scaleX(0.9300);transform-origin:100% 0;">Contract Employee:</div>
<svg style="left:660px;top:383.03999999999996px" width="10" height="10"><rect x="0.6" y="0.6" width="8.6" height="8.4" rx="1.3" stroke="#d8d8d8" stroke-width="1.2" fill="#f2f2f2"/></svg>
<div style="position:absolute;top:409.00px;font-size:8.72px;line-height:8.72px;color:#151515;white-space:nowrap;-webkit-text-stroke:0.08px #151515;right:35.80px;text-align:right;transform:scaleX(0.9300);transform-origin:100% 0;">Sync Name:</div>
<svg style="left:660px;top:408.9px" width="10" height="10"><rect x="0.6" y="0.6" width="8.6" height="8.4" rx="1.3" stroke="#575757" stroke-width="1.2" fill="#fbfbfb"/><path d="M1.9 4.5 L3.8 6.2 L7.8 2.5" stroke="#262626" stroke-width="1.15" fill="none"/></svg>
<div style="position:absolute;top:422.00px;font-size:8.72px;line-height:8.72px;color:#151515;white-space:nowrap;-webkit-text-stroke:0.08px #151515;right:35.80px;text-align:right;transform:scaleX(0.9300);transform-origin:100% 0;">Sync Address:</div>
<svg style="left:660px;top:420.96999999999997px" width="10" height="10"><rect x="0.6" y="0.6" width="8.6" height="8.4" rx="1.3" stroke="#575757" stroke-width="1.2" fill="#fbfbfb"/><path d="M1.9 4.5 L3.8 6.2 L7.8 2.5" stroke="#262626" stroke-width="1.15" fill="none"/></svg>
<div style="position:absolute;top:434.00px;font-size:8.72px;line-height:8.72px;color:#151515;white-space:nowrap;-webkit-text-stroke:0.08px #151515;right:35.80px;text-align:right;transform:scaleX(0.9300);transform-origin:100% 0;">Sync Phone:</div>
<svg style="left:660px;top:433.03999999999996px" width="10" height="10"><rect x="0.6" y="0.6" width="8.6" height="8.4" rx="1.3" stroke="#575757" stroke-width="1.2" fill="#fbfbfb"/><path d="M1.9 4.5 L3.8 6.2 L7.8 2.5" stroke="#262626" stroke-width="1.15" fill="none"/></svg>
<div style="position:absolute;top:446.00px;font-size:8.72px;line-height:8.72px;color:#151515;white-space:nowrap;-webkit-text-stroke:0.08px #151515;right:35.80px;text-align:right;transform:scaleX(0.9300);transform-origin:100% 0;">Sync Email:</div>
<svg style="left:660px;top:445.10999999999996px" width="10" height="10"><rect x="0.6" y="0.6" width="8.6" height="8.4" rx="1.3" stroke="#575757" stroke-width="1.2" fill="#fbfbfb"/><path d="M1.9 4.5 L3.8 6.2 L7.8 2.5" stroke="#262626" stroke-width="1.15" fill="none"/></svg>
<div style="position:absolute;left:0px;top:470px;width:690px;height:1px;background:#fbfbfb;"></div>
<div style="position:absolute;left:0px;top:471px;width:690px;height:16px;background:linear-gradient(90deg,#1b8dc9 0%,#1585c2 40%,#0b6aab 100%);"></div>
<div style="position:absolute;top:476.00px;font-size:8.6px;line-height:8.6px;color:#fff;white-space:nowrap;left:3.00px;transform:scaleX(0.8454);transform-origin:0 0;">Ready</div>
<div style="position:absolute;top:476.00px;font-size:8.6px;line-height:8.6px;color:#fff;white-space:nowrap;left:554.10px;transform:scaleX(0.8807);transform-origin:0 0;">Epicor Education 29/04/2024</div>
<div style="position:absolute;top:476.00px;font-size:8.6px;line-height:8.6px;color:#fff;white-space:nowrap;left:657.80px;transform:scaleX(0.8300);transform-origin:0 0;">11:47 AM</div>
</body></html>
